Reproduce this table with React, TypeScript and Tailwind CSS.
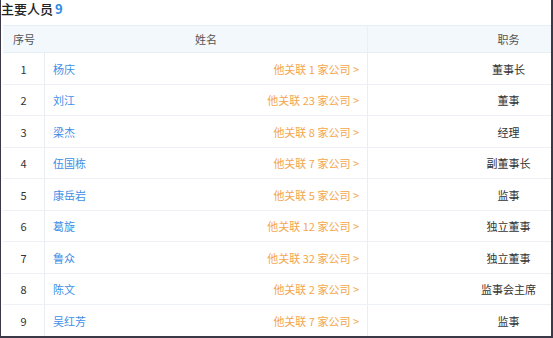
import React from "react";

type Person = {
  id: number;
  name: string;
  companies: number;
  title: string;
};

const PEOPLE: Person[] = [
  { id: 1, name: "杨庆", companies: 1, title: "董事长" },
  { id: 2, name: "刘江", companies: 23, title: "董事" },
  { id: 3, name: "梁杰", companies: 8, title: "经理" },
  { id: 4, name: "伍国栋", companies: 7, title: "副董事长" },
  { id: 5, name: "康岳岩", companies: 5, title: "监事" },
  { id: 6, name: "葛旋", companies: 12, title: "独立董事" },
  { id: 7, name: "鲁众", companies: 32, title: "独立董事" },
  { id: 8, name: "陈文", companies: 2, title: "监事会主席" },
  { id: 9, name: "吴红芳", companies: 7, title: "监事" },
];

function PersonRow({ person }: { person: Person }) {
  return (
    <div className="flex h-[31.5px] border-b border-[#edf1f5] text-[11px] text-[#333]">
      <div className="flex w-[42px] shrink-0 items-center justify-center border-r border-[#e8eef4] pt-px">
        {person.id}
      </div>
      <div className="flex w-[323px] shrink-0 items-center justify-between border-r border-[#e8eef4] px-2 pt-px">
        <span className="cursor-pointer text-[#3f8fe6]">{person.name}</span>
        <span className="cursor-pointer text-[#f4a64c]">
          他关联 {person.companies} 家公司 &gt;
        </span>
      </div>
      <div className="flex flex-1 items-center justify-center pl-[98px] pt-px">
        {person.title}
      </div>
    </div>
  );
}

export default function App() {
  return (
    <div
      className="h-[338px] w-[553px] overflow-hidden border-b-2 border-l border-r-2 border-[#3b3948] bg-white"
      style={{ fontFamily: '"Noto Sans CJK SC", "Noto Sans", sans-serif' }}
    >
      {/* Title */}
      <div className="flex h-[25px] items-start gap-0.5 leading-[18px]">
        <span className="text-[13px] font-medium text-[#222]">主要人员</span>
        <span className="text-[13px] font-bold text-[#2b8ae8]">9</span>
      </div>

      <div className="ml-[2px]">
        {/* Header */}
        <div className="flex h-[28px] border-y border-[#e6eef5] bg-[#f2f8fc] text-[11px] text-[#555]">
          <div className="flex w-[42px] shrink-0 items-center justify-center">序号</div>
          <div className="flex w-[323px] shrink-0 items-center justify-center border-r border-[#e9f1f7]">
            姓名
          </div>
          <div className="flex flex-1 items-center justify-center pl-[98px]">职务</div>
        </div>

        {PEOPLE.map((p) => (
          <PersonRow key={p.id} person={p} />
        ))}
      </div>
    </div>
  );
}
